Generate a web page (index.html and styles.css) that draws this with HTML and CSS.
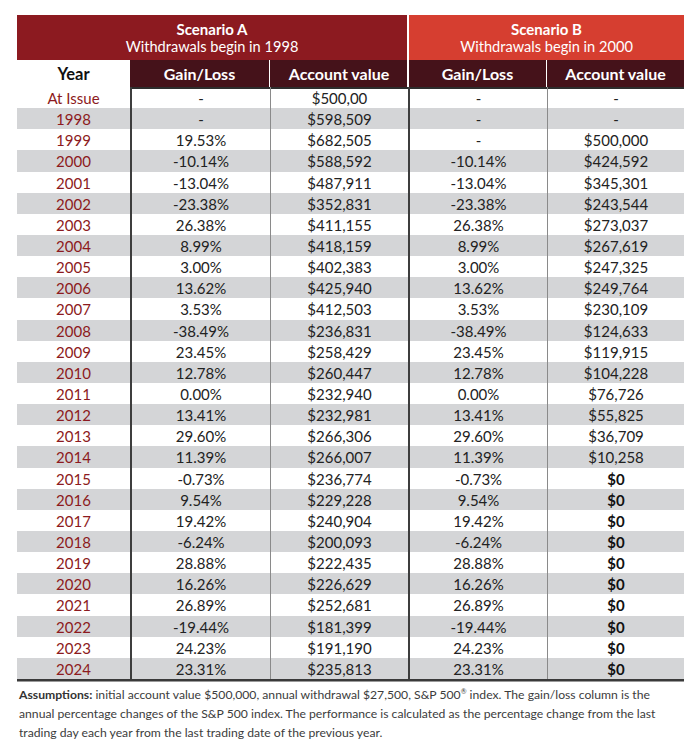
FILE: index.html
```html
<!DOCTYPE html>
<html>
<head>
<meta charset="utf-8">
<link rel="stylesheet" href="styles.css">
</head>
<body>
<div class="page">
  <div class="grid">
    <div class="scen scen-a"><b>Scenario A</b><span>Withdrawals begin in 1998</span></div>
    <div class="scen scen-b"><b>Scenario B</b><span>Withdrawals begin in 2000</span></div>

    <div class="ch ch-year">Year</div>
    <div class="ch ch-g">Gain/Loss</div>
    <div class="ch ch-v">Account value</div>
    <div class="ch ch-g ch-gb">Gain/Loss</div>
    <div class="ch ch-v ch-last">Account value</div>
  </div>
  <div class="grid body" id="rows"></div>
  <p class="note"><b>Assumptions:</b> initial account value $500,000, annual withdrawal $27,500, S&amp;P 500<sup>®</sup> index. The gain/loss column is the<br>annual percentage changes of the S&amp;P 500 index. The performance is calculated as the percentage change from the last<br>trading day each year from the last trading date of the previous year.</p>
</div>
<script src="app.js"></script>
</body>
</html>
```

FILE: app.js
```js
const data = [
["At Issue","-","$500,00","-","-"],
["1998","-","$598,509","-","-"],
["1999","19.53%","$682,505","-","$500,000"],
["2000","-10.14%","$588,592","-10.14%","$424,592"],
["2001","-13.04%","$487,911","-13.04%","$345,301"],
["2002","-23.38%","$352,831","-23.38%","$243,544"],
["2003","26.38%","$411,155","26.38%","$273,037"],
["2004","8.99%","$418,159","8.99%","$267,619"],
["2005","3.00%","$402,383","3.00%","$247,325"],
["2006","13.62%","$425,940","13.62%","$249,764"],
["2007","3.53%","$412,503","3.53%","$230,109"],
["2008","-38.49%","$236,831","-38.49%","$124,633"],
["2009","23.45%","$258,429","23.45%","$119,915"],
["2010","12.78%","$260,447","12.78%","$104,228"],
["2011","0.00%","$232,940","0.00%","$76,726"],
["2012","13.41%","$232,981","13.41%","$55,825"],
["2013","29.60%","$266,306","29.60%","$36,709"],
["2014","11.39%","$266,007","11.39%","$10,258"],
["2015","-0.73%","$236,774","-0.73%","$0"],
["2016","9.54%","$229,228","9.54%","$0"],
["2017","19.42%","$240,904","19.42%","$0"],
["2018","-6.24%","$200,093","-6.24%","$0"],
["2019","28.88%","$222,435","28.88%","$0"],
["2020","16.26%","$226,629","16.26%","$0"],
["2021","26.89%","$252,681","26.89%","$0"],
["2022","-19.44%","$181,399","-19.44%","$0"],
["2023","24.23%","$191,190","24.23%","$0"],
["2024","23.31%","$235,813","23.31%","$0"]
];
const host = document.getElementById("rows");
const cls = ["c year","c g","c v","c g gb","c v last"];
data.forEach((r, i) => {
  r.forEach((t, j) => {
    const d = document.createElement("div");
    d.className = cls[j] + (i % 2 ? " alt" : "") + (j === 4 && t === "$0" ? " zero" : "");
    d.textContent = t;
    host.appendChild(d);
  });
});
```

FILE: styles.css
```css
* { box-sizing: border-box; }
body { margin: 0; background: #fff; font-family: Lato, "Open Sans", sans-serif; color: #222; }
.page { padding: 15px 16px 0 17px; }
.grid {
  display: grid;
  grid-template-columns: 113px 140px 138px 139px 137px;
  width: 667px;
}
.scen {
  height: 45px;
  color: #fff;
  display: flex;
  flex-direction: column;
  align-items: center;
  justify-content: center;
  padding-top: 1px;
}
.scen b { display: block; font-size: 15px; line-height: 17px; font-weight: 700; }
.scen span { display: block; font-size: 14.6px; line-height: 17px; font-weight: 400; }
.scen-a { grid-column: 1 / 4; background: #8c1a20; margin-right: 1px; }
.scen-b { grid-column: 4 / 6; background: #d63e30; border-left: 2px solid #fff; margin-left: -1px; }
.ch {
  height: 27px;
  background: #45121a;
  color: #fff;
  font-weight: 700;
  font-size: 16px;
  display: flex;
  align-items: center;
  justify-content: center;
}
.ch-year { background: #fff; color: #111; font-size: 16.5px; }
.ch-g { border-right: 1px solid #fff; }
.ch-gb { border-left: 2px solid #fff; margin-left: -1px; }
.body { grid-auto-rows: 21.15px; border-bottom: 2px solid #3a3a3a; box-shadow: 0 1px 0 #9a9a9a; }
.c {
  display: flex;
  align-items: center;
  justify-content: center;
  font-size: 15px;
  color: #222;
  padding-top: 1px;
}
.c.alt { background: #d4d5d7; }
.year { color: #8c1a20; }
.g { border-left: 2px solid #3d3d3d; }
.v { border-left: 1px solid #8a8a8a; }
.body > .c:nth-child(-n+5):not(.year) { box-shadow: inset 0 2px 0 #2d2d2d; }
.zero { font-weight: 700; color: #111; }
.note {
  margin: 4px 0 0 2px;
  font-size: 12.2px;
  line-height: 19px;
  color: #3c3c3c;
  white-space: nowrap;
}
.note b { color: #333; }
.note sup { font-size: 7px; line-height: 0; vertical-align: 5px; }
```
